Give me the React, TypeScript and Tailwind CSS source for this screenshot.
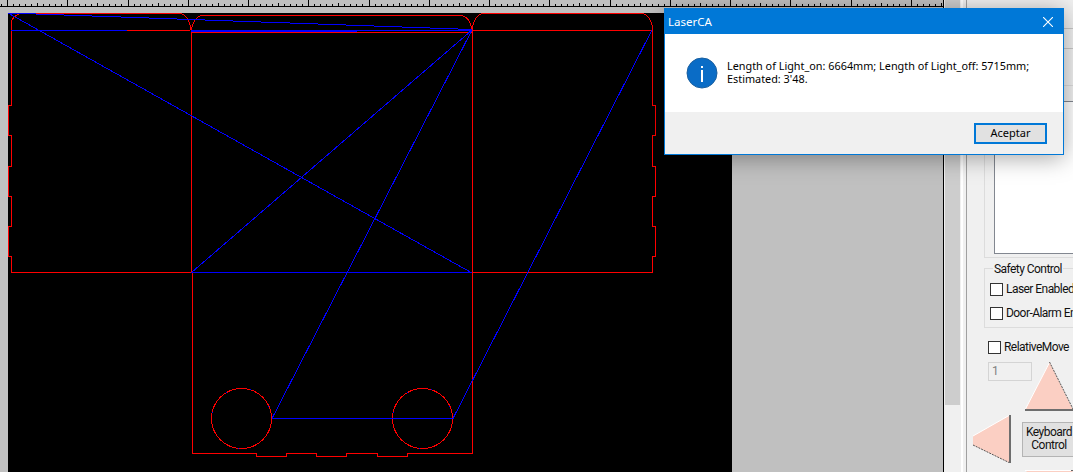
const RED = "#ff0000";
const BLUE = "#0000ff";

const redPaths = [
  // left panel
  "M11 25 A11.5 11.5 0 0 1 22.5 13.5 H179 A11.5 16.5 0 0 1 190.5 30 M11.5 25 V105.5 H8.5 V135.5 H11.5 V166.5 H8.5 V196.5 H11.5 V226.5 H8.5 V256.5 H11.5 V272.5 H192",
  "M127 30.5 H190",
  // middle flap
  "M191.5 33 A11 17 0 0 1 202.5 15.5 H460 A11.5 14 0 0 1 471.5 29.5 M191 32.5 H472 M191.5 32 V272.5",
  // right panel
  "M472.5 30 A11.5 16.5 0 0 1 484 13.5 H641 A11.5 16.5 0 0 1 652.5 30 M472 30.5 H652.5 M472.5 30 V453.5",
  "M652.5 30 V105.5 H655.5 V135.5 H652.5 V166.5 H655.5 V196.5 H652.5 V226.5 H655.5 V256.5 H652.5 V272.5 H192",
  // bottom panel with notches
  "M192.5 272 V453.5 H256.5 V456.5 H286.5 V453.5 H316.5 V456.5 H346.5 V453.5 H377.5 V456.5 H407.5 V453.5 H472",
];

const bluePaths = [
  "M8 13 L472 29.5",
  "M8 13 L472 273",
  "M11 30.5 H127",
  "M191 30.5 H472",
  "M191 31.5 H357",
  "M472 30 L191.5 272.5",
  "M472 30 L272 418.5",
  "M652 30 L453 418.5",
  "M272 418.5 H453",
  "M192 272.5 H472",
];

function CutDrawing() {
  return (
    <svg width="724" height="459" viewBox="8 13 724 459" shapeRendering="crispEdges" fill="none" className="block">
      {redPaths.map((d, i) => (
        <path key={i} d={d} stroke={RED} strokeWidth="1" />
      ))}
      <circle cx="241.5" cy="418.5" r="30" stroke={RED} />
      <circle cx="422.5" cy="418.5" r="30" stroke={RED} />
      <circle cx="241.5" cy="418.5" r="30" stroke={BLUE} strokeDasharray="1 24" />
      <circle cx="422.5" cy="418.5" r="30" stroke={BLUE} strokeDasharray="1 24" />
      {bluePaths.map((d, i) => (
        <path key={i} d={d} stroke={BLUE} strokeWidth="1" />
      ))}
    </svg>
  );
}

function Ruler() {
  const ticks = [];
  for (let i = -6; i < 160; i++) {
    const x = Math.round(7 + i * 6.025);
    const top = i % 10 === 0 ? 0 : i % 5 === 0 ? 3 : 4;
    ticks.push(<path key={i} d={`M${x + 0.5} ${top} V6`} stroke="#000" />);
  }
  return (
    <svg width="943" height="7" shapeRendering="crispEdges" className="block">
      {ticks}
      <path d="M0 6.5 H943" stroke="#000" />
    </svg>
  );
}

function Check({ label }: { label: string }) {
  return (
    <div className="flex items-center h-[13px] whitespace-nowrap">
      <div className="w-[13px] h-[13px] shrink-0 border border-[#333333] bg-white" />
      <span className="ml-[3px] text-[12px] tracking-[-0.55px] leading-[15px] text-[#111111]">{label}</span>
    </div>
  );
}

function InfoIcon() {
  return (
    <svg width="32" height="32" viewBox="0 0 32 32" className="shrink-0">
      <circle cx="16" cy="16" r="15" fill="#0a6cc6" stroke="#1a5f9f" strokeWidth="1" />
      <rect x="15" y="9" width="2" height="2" fill="#fff" />
      <rect x="15" y="13" width="2" height="12" fill="#fff" />
    </svg>
  );
}

function Dialog() {
  return (
    <div className="absolute left-[664px] top-[8px] w-[400px] h-[147px] flex flex-col border border-[#0078d7] bg-white shadow-[0_3px_22px_rgba(0,0,0,0.35)] font-['Noto_Sans',sans-serif]">
      <div className="h-[25px] shrink-0 flex items-center justify-between bg-[#0078d7] pl-[3px] pr-[10px] text-white text-[11.5px]">
        <span>LaserCA</span>
        <svg width="10" height="10" viewBox="0 0 10 10" className="block">
          <path d="M0 0 L10 10 M10 0 L0 10" stroke="#fff" strokeWidth="1.1" />
        </svg>
      </div>
      <div className="h-[78px] shrink-0 flex items-start pl-[21px] pt-[23px]">
        <InfoIcon />
        <p className="ml-[9px] mt-[2px] w-[320px] text-[10.85px] leading-[13px] text-[#000000]">
          Length of Light_on: 6664mm; Length of Light_off: 5715mm;
          <br />
          Estimated: 3'48.
        </p>
      </div>
      <div className="flex-1 flex justify-end items-start bg-[#f0f0f0] pt-[11px] pr-[16px]">
        <button className="w-[73px] h-[21px] flex items-center justify-center border-2 border-[#0078d7] bg-[#e1e1e1] text-[11px] text-black">
          Aceptar
        </button>
      </div>
    </div>
  );
}

function SidePanel() {
  return (
    <div className="flex-1 min-w-0 overflow-hidden bg-[#f0f0f0] pt-[28px] font-['Roboto',sans-serif]">
      <div className="h-px bg-[#c8c8c8]" />
      <div className="h-px bg-[#c8c8c8] mt-[19px]" />
      <div className="ml-[17px] mt-[36px] w-[130px] h-[173px] border border-[#dcdcdc] pl-[9px] pt-[15px]">
        <div className="w-[120px] h-[153px] bg-white border border-[#828790]" />
      </div>
      <fieldset className="ml-[17px] mt-[2px] w-[130px] h-[68px] border border-[#dcdcdc] pl-[5px]">
        <legend className="ml-[3px] px-px h-[16px] text-[12px] tracking-[-0.55px] leading-[18px] text-[#111111]">Safety Control</legend>
        <div className="flex flex-col gap-[11px] mt-[7px]">
          <Check label="Laser Enabled" />
          <Check label="Door-Alarm Enable" />
        </div>
      </fieldset>
      <div className="ml-[21px] mt-[13px]">
        <Check label="RelativeMove" />
      </div>
      <div className="ml-[21px] mt-[8px] flex items-start">
        <div className="w-[44px] h-[19px] shrink-0 border border-[#d4d4d4] pl-[3px] text-[12px] leading-[17px] text-[#808080]">1</div>
        <svg width="49" height="49" viewBox="0 0 49 49" className="-ml-[7px] shrink-0 block">
          <path d="M24.5 0 L0 48 H48 Z" fill="#fbcfc3" />
          <path d="M24.5 0.5 L0.5 47" stroke="#ffffff" fill="none" />
          <path d="M24.5 0 L48 47" stroke="#555555" strokeDasharray="2 1" fill="none" />
          <path d="M0 48 H49" stroke="#6e6e6e" strokeWidth="2" />
        </svg>
      </div>
      <div className="ml-[6px] mt-[4px] flex items-center h-[48px]">
        <svg width="38" height="48" viewBox="0 0 38 48" className="shrink-0 block">
          <path d="M37 0 V48 L0 30 V21 Z" fill="#fbcfc3" />
          <path d="M36 0.5 L0 21" stroke="#ffffff" fill="none" />
          <path d="M0 30 L37 48" stroke="#555555" strokeDasharray="2 1" fill="none" />
          <path d="M37 0 V48" stroke="#6e6e6e" strokeWidth="2" />
        </svg>
        <div className="ml-[11px] w-[54px] h-[35px] shrink-0 flex flex-col items-center justify-center border border-[#b4b4b4] bg-[#e1e1e1] text-[12px] tracking-[-0.5px] leading-[13px] text-[#111111]">
          <span>Keyboard</span>
          <span>Control</span>
        </div>
      </div>
      <svg width="49" height="3" viewBox="0 0 49 3" className="ml-[58px] mt-[7px] block">
        <path d="M1 3 L2 0 H47 L48 3 Z" fill="#fbcfc3" />
        <path d="M0 0.5 H46" stroke="#ffffff" />
        <path d="M46 0.5 H49" stroke="#666666" />
      </svg>
    </div>
  );
}

export default function App() {
  return (
    <div className="relative w-[1073px] h-[472px] overflow-hidden flex bg-[#f0f0f0]">
      <div className="w-[944px] h-full shrink-0 flex flex-col bg-[#c0c0c0] border-r border-black">
        <Ruler />
        <div className="flex-1 flex items-start pl-[8px] pt-[6px]">
          <div className="w-[724px] h-[459px] bg-black">
            <CutDrawing />
          </div>
        </div>
      </div>
      <div className="w-[1px] shrink-0" />
      <div className="w-[15px] shrink-0 h-[405px] bg-[#cdcdcd]" />
      <div className="w-[1px] shrink-0" />
      <div className="w-[2px] shrink-0 bg-white" />
      <div className="w-[3px] shrink-0" />
      <div className="w-px shrink-0 bg-[#a0a0a0]" />
      <SidePanel />
      <Dialog />
    </div>
  );
}
